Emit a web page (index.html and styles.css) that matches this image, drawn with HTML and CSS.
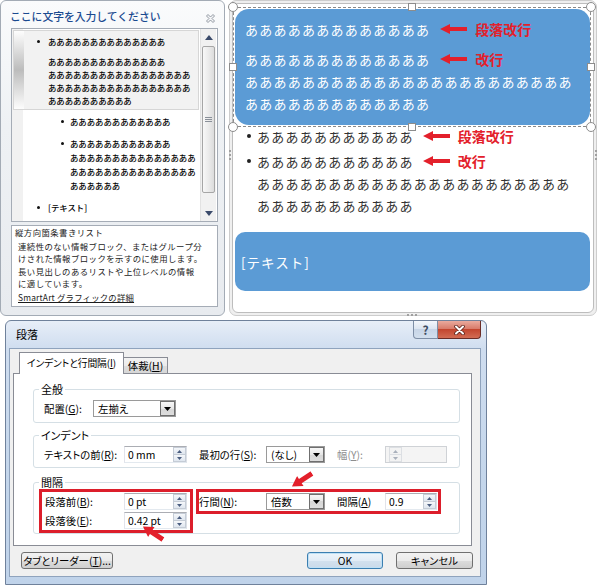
FILE: index.html
```
<!DOCTYPE html>
<html lang="ja">
<head>
<meta charset="utf-8">
<title>段落</title>
<link rel="stylesheet" href="styles.css">
</head>
<body>
<div class="top">
  <section class="tp">
    <div class="tp-head">
      <h1 class="tp-title">ここに文字を入力してください</h1>
      <svg class="tp-close" width="11" height="11" viewBox="0 0 11 11"><path d="M1.5 3 3 1.5 5.5 4 8 1.5 9.5 3 7 5.5 9.5 8 8 9.5 5.5 7 3 9.5 1.5 8 4 5.5Z" fill="#f4f5f7" stroke="#868d97" stroke-width="0.9" stroke-linejoin="round"/></svg>
    </div>
    <div class="tp-edit">
      <div class="tp-list">
        <div class="tp-sel">
          <div class="it l1"><i class="dot"></i><span>ああああああああああああああ</span></div>
          <div class="it cont"><span>ああああああああああああああ<br>あああああああああああああああああ<br>あああああああああああああああああ<br>ああああああああああ</span></div>
        </div>
        <div class="tp-rest">
          <div class="it l2"><i class="dot"></i><span>ああああああああああああ</span></div>
          <div class="it l2"><i class="dot"></i><span>ああああああああああああ<br>あああああああああああああああ<br>あああああああああああああああ<br>ああああああ</span></div>
          <div class="it l1"><i class="dot"></i><span>[テキスト]</span></div>
        </div>
      </div>
      <div class="sb">
        <div class="sb-btn"><svg width="8" height="5" viewBox="0 0 8 5"><path d="M0 5 4 0 8 5Z" fill="#3b4b6b"/></svg></div>
        <div class="sb-thumb"><svg width="7" height="5" viewBox="0 0 7 5"><path d="M0 .5H7M0 2.5H7M0 4.5H7" stroke="#8a9099"/></svg></div>
        <div class="sb-track"></div>
        <div class="sb-btn"><svg width="8" height="5" viewBox="0 0 8 5"><path d="M0 0 4 5 8 0Z" fill="#3b4b6b"/></svg></div>
      </div>
    </div>
    <div class="tp-desc">
      <p>縦方向箇条書きリスト</p>
      <p class="d-body">連続性のない情報ブロック、またはグループ分<br>けされた情報ブロックを示すのに使用します。<br>長い見出しのあるリストや上位レベルの情報<br>に適しています。</p>
      <p class="d-link"><u>SmartArt グラフィックの詳細</u></p>
    </div>
  </section>

  <section class="cv">
    <div class="cv-in">
      <div class="bx1">
        <div class="row">あああああああああああああ<span class="note"><svg width="27" height="10" viewBox="0 0 27 10"><path d="M0 5 10 0V3H27V7H10V10Z" fill="#e3202b"/></svg><b>段落改行</b></span></div>
        <div class="p2">
          <div class="row">あああああああああああああ<span class="note"><svg width="27" height="10" viewBox="0 0 27 10"><path d="M0 5 10 0V3H27V7H10V10Z" fill="#e3202b"/></svg><b>改行</b></span></div>
          <div class="row">あああああああああああああああああああああああ</div>
          <div class="row">あああああああああああああ</div>
        </div>
      </div>
      <div class="cl">
        <div class="cli"><i class="cdot"></i><div>
          <div class="row">あああああああああああ<span class="note"><svg width="27" height="10" viewBox="0 0 27 10"><path d="M0 5 10 0V3H27V7H10V10Z" fill="#e3202b"/></svg><b>段落改行</b></span></div>
        </div></div>
        <div class="cli"><i class="cdot"></i><div>
          <div class="row">あああああああああああ<span class="note"><svg width="27" height="10" viewBox="0 0 27 10"><path d="M0 5 10 0V3H27V7H10V10Z" fill="#e3202b"/></svg><b>改行</b></span></div>
          <div class="row">ああああああああああああああああああああああ</div>
          <div class="row">あああああああああああ</div>
        </div></div>
      </div>
      <div class="bx2">[テキスト]</div>
      <div class="sel">
        <i class="h hc tl"></i><i class="h hc tr"></i><i class="h hc bl"></i><i class="h hc br"></i>
        <i class="h hs tm"></i><i class="h hs bm"></i><i class="h hs lm"></i><i class="h hs rm"></i>
      </div>
    </div>
    <i class="grip gl"></i><i class="grip gr"></i><i class="grip gb"></i>
  </section>
</div>

<section class="dlg">
  <div class="dlg-tb">
    <span class="dlg-title">段落</span>
    <span class="tb-help">?</span>
    <span class="tb-close"><svg width="13" height="10" viewBox="0 0 13 10"><path d="M3 1.5 10 8.5M10 1.5 3 8.5" stroke="#5b2119" stroke-width="3.6" stroke-linecap="round"/><path d="M3 1.5 10 8.5M10 1.5 3 8.5" stroke="#fff" stroke-width="2" stroke-linecap="round"/></svg></span>
  </div>
  <div class="dlg-cl">
    <div class="tabs">
      <span class="tab on">インデントと行間隔(<u>I</u>)</span>
      <span class="tab off">体裁(<u>H</u>)</span>
    </div>
    <div class="page">
      <fieldset class="grp g1">
        <legend>全般</legend>
        <div class="grow">
          <span class="lb w49">配置(<u>G</u>):</span>
          <span class="cmb w83">左揃え<i class="dd"><svg width="7" height="4" viewBox="0 0 7 4"><path d="M0 0H7L3.5 4Z" fill="#000"/></svg></i></span>
        </div>
      </fieldset>
      <fieldset class="grp g2">
        <legend>インデント</legend>
        <div class="grow">
          <span class="lb w80">テキストの前(<u>R</u>):</span>
          <span class="in w63">0 mm<i class="sp"><b><svg width="5" height="3" viewBox="0 0 5 3"><path d="M0 3 2.5 0 5 3Z" fill="#4a5d80"/></svg></b><b><svg width="5" height="3" viewBox="0 0 5 3"><path d="M0 0 2.5 3 5 0Z" fill="#4a5d80"/></svg></b></i></span>
          <span class="lb w67 ml12">最初の行(<u>S</u>):</span>
          <span class="cmb w59">(なし)<i class="dd"><svg width="7" height="4" viewBox="0 0 7 4"><path d="M0 0H7L3.5 4Z" fill="#000"/></svg></i></span>
          <span class="lb w48 ml12 dis">幅(<u>Y</u>):</span>
          <span class="in w62 dis"><i class="sp"><b><svg width="5" height="3" viewBox="0 0 5 3"><path d="M0 3 2.5 0 5 3Z" fill="#a9b0bb"/></svg></b><b><svg width="5" height="3" viewBox="0 0 5 3"><path d="M0 0 2.5 3 5 0Z" fill="#a9b0bb"/></svg></b></i></span>
        </div>
      </fieldset>
      <fieldset class="grp g3">
        <legend>間隔</legend>
        <div class="sprow">
          <div class="rbox rb1">
            <div class="grow">
              <span class="lb w79">段落前(<u>B</u>):</span>
              <span class="in w63">0 pt<i class="sp"><b><svg width="5" height="3" viewBox="0 0 5 3"><path d="M0 3 2.5 0 5 3Z" fill="#4a5d80"/></svg></b><b><svg width="5" height="3" viewBox="0 0 5 3"><path d="M0 0 2.5 3 5 0Z" fill="#4a5d80"/></svg></b></i></span>
            </div>
            <div class="grow">
              <span class="lb w79">段落後(<u>E</u>):</span>
              <span class="in w63">0.42 pt<i class="sp"><b><svg width="5" height="3" viewBox="0 0 5 3"><path d="M0 3 2.5 0 5 3Z" fill="#4a5d80"/></svg></b><b><svg width="5" height="3" viewBox="0 0 5 3"><path d="M0 0 2.5 3 5 0Z" fill="#4a5d80"/></svg></b></i></span>
            </div>
          </div>
          <div class="rbox rb2">
            <div class="grow">
              <span class="lb w67">行間(<u>N</u>):</span>
              <span class="cmb w59">倍数<i class="dd"><svg width="7" height="4" viewBox="0 0 7 4"><path d="M0 0H7L3.5 4Z" fill="#000"/></svg></i></span>
              <span class="lb w48 ml12">間隔(<u>A</u>)</span>
              <span class="in w52">0.9<i class="sp"><b><svg width="5" height="3" viewBox="0 0 5 3"><path d="M0 3 2.5 0 5 3Z" fill="#4a5d80"/></svg></b><b><svg width="5" height="3" viewBox="0 0 5 3"><path d="M0 0 2.5 3 5 0Z" fill="#4a5d80"/></svg></b></i></span>
            </div>
          </div>
        </div>
      </fieldset>
    </div>
    <div class="btns">
      <span class="btn b-tab">タブとリーダー(<u>T</u>)...</span>
      <span class="btn b-ok">OK</span>
      <span class="btn b-cancel">キャンセル</span>
    </div>
  </div>
  <svg class="rarr ra1" width="24" height="12" viewBox="0 0 24 12"><path d="M0 6 10 0V3.5H24V8.5H10V12Z" fill="#e3202b"/></svg>
  <svg class="rarr ra2" width="24" height="12" viewBox="0 0 24 12"><path d="M0 6 10 0V3.5H24V8.5H10V12Z" fill="#e3202b"/></svg>
</section>
</body>
</html>
```
FILE: styles.css
```
*{box-sizing:border-box;margin:0;padding:0}
html,body{background:#fff}
body{width:598px;height:588px;overflow:hidden;font-family:"Noto Sans CJK JP","Noto Sans",sans-serif;color:#000}
u{text-decoration:underline;text-underline-offset:1px}
i,b{font-style:normal}

.top{display:flex;gap:4px;align-items:flex-start}

/* ---------- text pane ---------- */
.tp{width:225px;height:316px;border:1px solid #a3abb5;border-radius:6px;background:linear-gradient(#fafbfc,#eef1f4 40%,#e8ebef);padding:0 6px 0 10px;display:flex;flex-direction:column}
.tp-head{height:27px;display:flex;align-items:center;justify-content:space-between;flex:none}
.tp-title{font-size:10.8px;font-weight:500;color:#1a4a90;margin-left:-1px;line-height:14px;margin-top:2px}
.tp-close{margin-right:2px;margin-top:7px}
.tp-edit{height:194px;border:1px solid #a5acb6;display:flex;background:#fff;flex:none}
.tp-list{width:188px;padding-top:1px;background:linear-gradient(to right,#f1f1f1 11px,#fff 11px);font-size:8.4px;font-weight:500;color:#000;white-space:nowrap}
.tp-sel{width:186px;height:80px;margin-left:1px;border:1px solid #d6d6d6;background:linear-gradient(#fdfdfd,#bcbcbc 50%,#fdfdfd) 0 0/10px 100% no-repeat,#f2f2f2;padding-top:4px;line-height:13px}
.it{display:flex;align-items:flex-start}
.dot{display:block;width:3px;height:3px;border-radius:50%;background:#111;flex:none}
.tp-sel .dot{margin:5px 8px 0 23px}
.tp-sel .cont{margin-top:7px;padding-left:34px}
.tp-rest{padding:4px 0 0 2px;line-height:14px}
.tp-rest .it+.it{margin-top:8px}
.tp-rest .l2 .dot{margin:5.5px 6px 0 47px}
.tp-rest .l1 .dot{margin:5.5px 8px 0 23px}

.sb{width:16px;display:flex;flex-direction:column;border-left:1px solid #e2e2e2;background:#f1f1f1}
.sb-btn{height:16px;display:flex;align-items:center;justify-content:center;flex:none}
.sb-thumb{height:147px;margin:1px 1px 0;border:1px solid #a6a6a6;border-radius:2px;background:linear-gradient(to right,#f8f8f8,#ebebeb 50%,#dcdcdc);display:flex;align-items:center;justify-content:center;flex:none}
.sb-track{flex:1}

.tp-desc{margin-top:3px;height:82px;border:1px solid #a5acb6;background:#fff;padding:0 0 0 3px;font-size:8.4px;line-height:12.2px;letter-spacing:0.45px;color:#1b1b1b;white-space:nowrap;flex:none}
.d-body{margin-top:2px;padding-left:3px}
.d-link{margin-top:2px;padding-left:3px;letter-spacing:0.2px}

/* ---------- canvas ---------- */
.cv{width:368px;height:316px;border:1px solid #cdcdcd;border-radius:7px;padding:2px;background:#efefef;position:relative}
.cv-in{height:100%;border:1px solid #bdbdbd;border-radius:6px;background:#fff;padding:5px 3px 0 2px;position:relative;font-size:13px;letter-spacing:1.25px;white-space:nowrap}
.row{display:flex;align-items:center;height:22px}
.bx1{height:116px;background:#5b9bd5;border-radius:14px;padding:9px 0 0 10px;color:#fff}
.bx1 .p2{margin-top:8px}
.note{display:inline-flex;align-items:center;letter-spacing:0;margin-left:10px;color:#e3202b;font-size:14px}
.note svg{margin-right:8px}
.note b{font-weight:bold}
.cl{color:#333;padding-left:12px}
.cl .note{margin-left:9px}
.cli{display:flex;align-items:flex-start}
.cli+.cli{margin-top:3px}
.cdot{display:block;width:4px;height:4px;border-radius:50%;background:#222;margin:9px 6px 0 0;flex:none}
.bx2{margin-top:16px;height:59px;background:#5b9bd5;border-radius:10px;color:#fff;display:flex;align-items:center;padding-left:6px;font-size:13.5px;letter-spacing:1px}

.sel{position:absolute;left:0;top:3px;width:358px;height:120px;border:1px dashed #8a8a8a}
.h{position:absolute;display:block;background:#fff;border:1px solid #8c8c8c}
.hc{width:10px;height:10px;border-radius:50%}
.hs{width:8px;height:8px}
.tl{left:-6px;top:-6px}.tr{right:-6px;top:-6px}.bl{left:-6px;bottom:-6px}.br{right:-6px;bottom:-6px}
.tm{left:calc(50% - 4px);top:-5px}.bm{left:calc(50% - 4px);bottom:-5px}
.lm{left:-5px;top:calc(50% - 4px)}.rm{right:-5px;top:calc(50% - 4px)}

.grip{position:absolute;display:block}
.gl{left:-1px;top:149px;height:10px;border-left:2px dotted #a0a0a0}
.gr{right:-1px;top:149px;height:10px;border-right:2px dotted #a0a0a0}
.gb{bottom:-1px;left:177px;width:10px;border-bottom:2px dotted #a0a0a0}

/* ---------- dialog ---------- */
.dlg{position:relative;margin:4px 0 0 5px;width:482px;height:265px;border:1px solid #6f819b;border-radius:6px 6px 0 0;background:linear-gradient(#e7eef8,#cfddef 28px,#c4d6eb 60%,#c0d3ea);padding:0 5px 7px 3px;display:flex;flex-direction:column;font-size:10.4px;font-feature-settings:"palt"}
.dlg-tb{height:27px;display:flex;align-items:flex-start;flex:none}
.dlg-title{line-height:27px;padding-left:7px;font-size:11px}
.tb-help{margin-left:auto;width:25px;height:18px;border:1px solid #7d8ea6;border-top:none;border-radius:0 0 0 4px;background:linear-gradient(#f3f6fb,#dce5f1 45%,#c7d5e7 50%,#d2dfee);display:flex;align-items:center;justify-content:center;font-weight:bold;font-size:12px;color:#3e4c62}
.tb-close{width:43px;height:18px;border:1px solid #6b2d27;border-top:none;border-left:none;border-radius:0 0 4px 0;background:linear-gradient(#eaaa9d,#d87c6b 45%,#c3462f 50%,#d26c54);display:flex;align-items:center;justify-content:center}

.dlg-cl{flex:1;border:1px solid #8fa3bd;background:#f0f0f0;padding:3px 8px 7px 3px;display:flex;flex-direction:column}
.tabs{display:flex;align-items:flex-end;height:22px;padding-left:6px;margin-bottom:-1px;position:relative;z-index:1;flex:none}
.tab{border:1px solid #898c95;border-bottom:none;white-space:nowrap;text-align:center}
.tab.on{width:105px;height:22px;line-height:20px;background:#fff;font-size:9.8px;letter-spacing:-0.1px}
.tab.off{width:45px;height:16px;line-height:15px;margin:0 0 1px -1px;background:linear-gradient(#f3f3f3,#ebebeb 50%,#dddddd 50%,#d7d7d7)}
.page{height:173px;border:1px solid #898c95;background:#fff;padding:8px 11px 0 19px;flex:none}

.grp{border:1px solid #d5dfe5;border-radius:3px;padding:0;margin:0;min-width:0}
.grp legend{margin-left:5px;padding:0 2px;line-height:14px;font-size:11px}
.g1{padding:4px 0 5px}
.g2{margin-top:5px;padding:4px 0 4px}
.g3{margin-top:7px}
.grow{display:flex;align-items:center;height:17px}
.g1 .grow,.g2 .grow{padding-left:10px}
.lb{flex:none;white-space:nowrap}
.w49{width:49px}.w80{width:80px}.w79{width:79px}.w67{width:67px}.w48{width:48px}
.ml12{margin-left:12px}
.in,.cmb{flex:none;height:17px;border:1px solid #abadb3;border-color:#abadb3 #dbdfe6 #e3e9ef #e2e3ea;background:#fff;display:flex;align-items:center;justify-content:space-between;white-space:nowrap}
.in{padding-left:3px}
.cmb{padding-left:4px;border-color:#9a9a9a}
.w63{width:63px}.w83{width:83px}.w59{width:59px}.w62{width:62px}.w52{width:52px}
.dis{color:#8e8e8e}
.in.dis{background:#f4f4f4;border-color:#cfd2d6}
.dd{width:15px;height:15px;border:1px solid #6f6f6f;background:linear-gradient(#f7f7f7,#e6e6e6 50%,#d6d6d6 50%,#dddddd);display:flex;align-items:center;justify-content:center;flex:none}
.sp{width:13px;height:15px;display:flex;flex-direction:column;flex:none}
.sp b{flex:1;display:flex;align-items:center;justify-content:center;border:1px solid #c5ccd6;background:linear-gradient(#f5f7fa,#dfe6ef)}
.sp b+b{border-top:none}
.dis .sp b{border-color:#dcdfe3;background:#f3f3f3}

.sprow{display:flex;align-items:flex-start;padding-left:5px}
.rbox{border:3px solid #dc1e2b}
.rb1{padding:1px 3px}
.rb1 .grow+.grow{margin-top:2px}
.rb2{margin-left:3px;padding:1px 1px 1px 0}

.btns{display:flex;margin-top:6px;padding-left:8px;flex:none}
.btn{height:17px;border:1px solid #707070;border-radius:3px;background:linear-gradient(#f2f2f2,#ebebeb 50%,#dddddd 50%,#cfcfcf);display:flex;align-items:center;justify-content:center;white-space:nowrap}
.b-tab{width:92px}
.b-ok{width:76px;margin-left:auto;border-color:#3c7fb1;background:linear-gradient(#eef5fb,#e2ecf6 50%,#d3e1ee 50%,#cbdaea);box-shadow:inset 0 0 0 1px #bfe0f5}
.b-cancel{width:77px;margin-left:13px;margin-right:-1px}

.rarr{position:absolute}
.ra1{left:135px;top:206px;transform:rotate(33deg)}
.ra2{left:284px;top:153px;transform:rotate(-33deg)}
```
